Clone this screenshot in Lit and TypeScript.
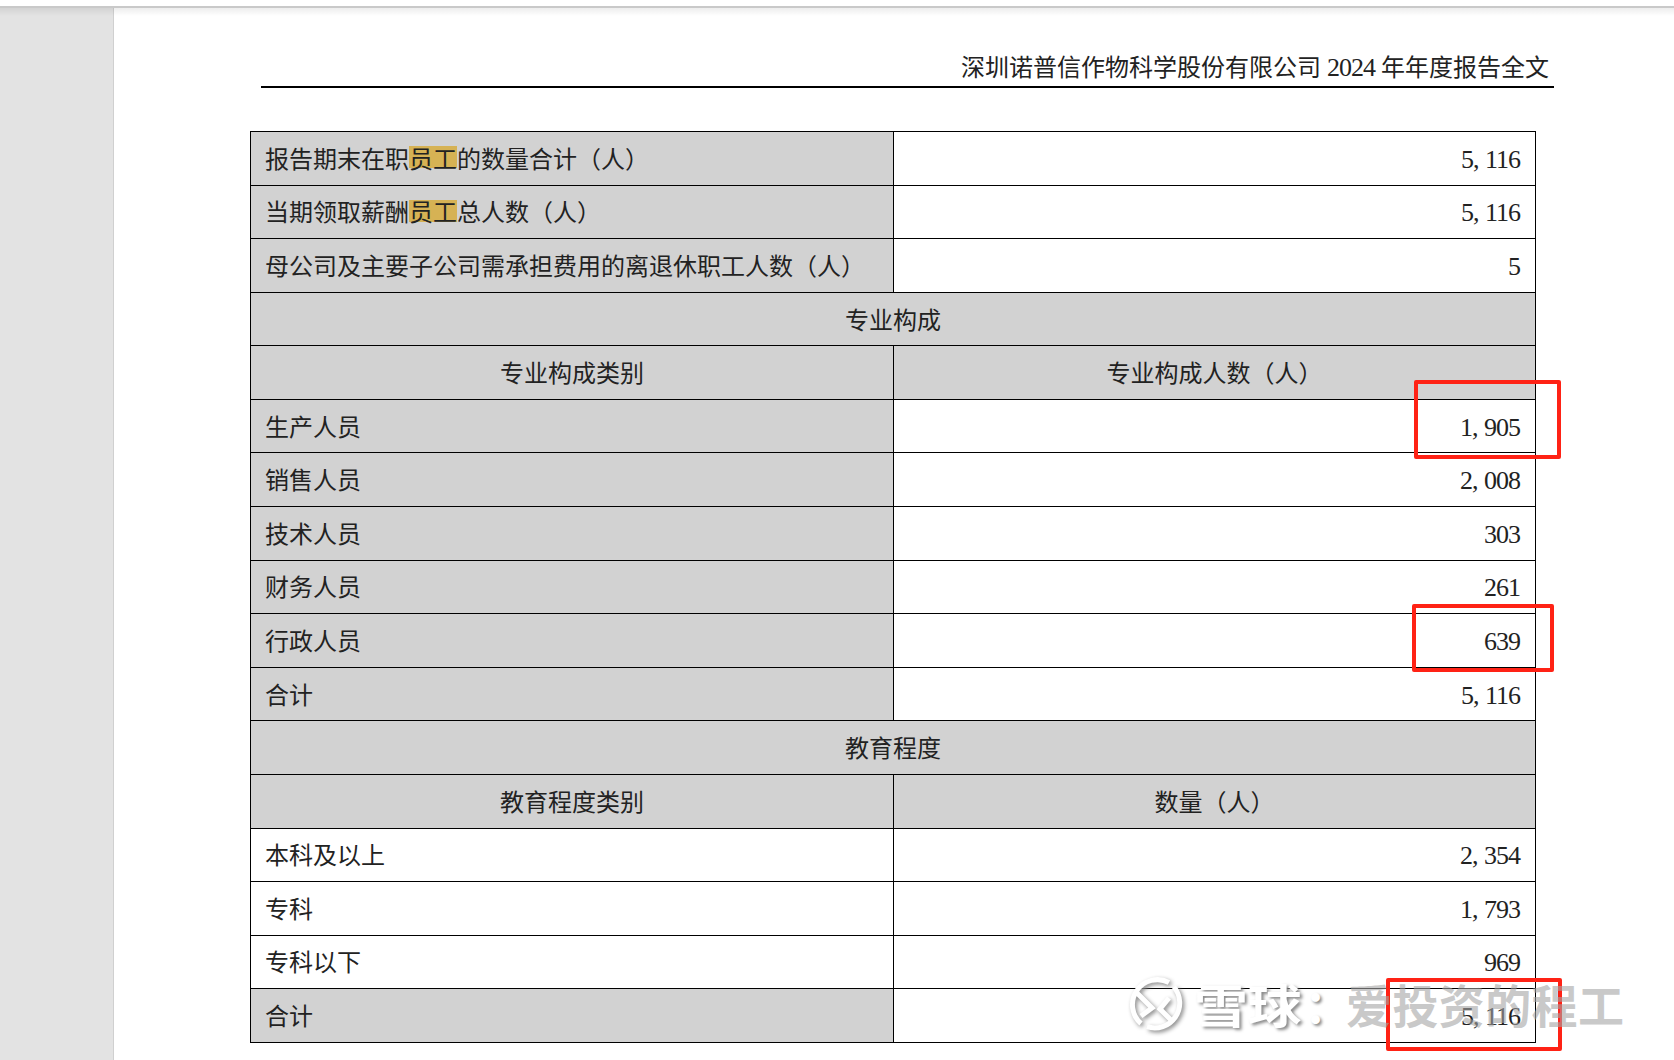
import { LitElement, html, css } from "lit";
import { customElement } from "lit/decorators.js";

type Row =
  | { t: "kv"; k: unknown; v: string; fill?: boolean }
  | { t: "sec"; k: string }
  | { t: "head"; a: string; b: string };

const hl = (a: string, b: string) => html`${a}<span class="hl">员工</span>${b}`;

const rows: Row[] = [
  { t: "kv", k: hl("报告期末在职", "的数量合计（人）"), v: "5,116", fill: true },
  { t: "kv", k: hl("当期领取薪酬", "总人数（人）"), v: "5,116", fill: true },
  { t: "kv", k: "母公司及主要子公司需承担费用的离退休职工人数（人）", v: "5", fill: true },
  { t: "sec", k: "专业构成" },
  { t: "head", a: "专业构成类别", b: "专业构成人数（人）" },
  { t: "kv", k: "生产人员", v: "1,905", fill: true },
  { t: "kv", k: "销售人员", v: "2,008", fill: true },
  { t: "kv", k: "技术人员", v: "303", fill: true },
  { t: "kv", k: "财务人员", v: "261", fill: true },
  { t: "kv", k: "行政人员", v: "639", fill: true },
  { t: "kv", k: "合计", v: "5,116", fill: true },
  { t: "sec", k: "教育程度" },
  { t: "head", a: "教育程度类别", b: "数量（人）" },
  { t: "kv", k: "本科及以上", v: "2,354" },
  { t: "kv", k: "专科", v: "1,793" },
  { t: "kv", k: "专科以下", v: "969" },
  { t: "kv", k: "合计", v: "5,116", fill: true },
];

const num = (v: string) => {
  const [a, b] = v.split(",");
  return b === undefined ? v : html`${a}<span class="comma">,</span>${b}`;
};

@customElement("app-root")
export class AppRoot extends LitElement {
  static styles = css`
    :host {
      display: block;
      position: relative;
      width: 1674px;
      height: 1060px;
      overflow: hidden;
      background: #e3e3e3;
      font-family: "Liberation Serif", "Noto Sans CJK SC", serif;
      font-size: 24px;
      color: #222;
    }
    .topbar {
      height: 6px;
      background: #fff;
      border-bottom: 2px solid #c9c9c9;
    }
    .shade {
      position: absolute;
      left: 0;
      right: 0;
      top: 8px;
      height: 8px;
      background: linear-gradient(rgba(0, 0, 0, 0.07), rgba(0, 0, 0, 0));
    }
    .main {
      display: flex;
      height: 1052px;
    }
    .gutter {
      width: 113px;
      flex: none;
      background: #e3e3e3;
      border-right: 1px solid #d0d0d0;
    }
    .page {
      flex: 1;
      background: #fff;
      padding: 40px 0 0 136px;
    }
    .header {
      width: 1293px;
      box-sizing: border-box;
      margin-left: 11px;
      height: 40px;
      border-bottom: 2px solid #000;
      text-align: right;
      padding-right: 5px;
      line-height: 40px;
      white-space: pre;
    }
    .digits {
      font-size: 26px;
      letter-spacing: -1px;
    }
    .table {
      margin-top: 43px;
      width: 1286px;
      display: grid;
      grid-template-columns: 643px 1fr;
      grid-auto-rows: 53.58px;
      box-sizing: border-box;
      border: solid #000;
      border-width: 1.5px 1.5px 0 1.5px;
    }
    .cell {
      display: flex;
      align-items: center;
      box-sizing: border-box;
      border-bottom: 1.5px solid #000;
      padding: 0 14px 2px;
      white-space: nowrap;
      min-width: 0;
    }
    .cell.left { border-right: 1.5px solid #000; }
    .fill { background: #d2d2d2; }
    .num {
      justify-content: flex-end;
      padding: 3px 15px 0 0;
      font-size: 26px;
      letter-spacing: -1px;
    }
    .center { justify-content: center; }
    .span { grid-column: 1 / 3; }
    .hl {
      background-image: linear-gradient(#d6b254, #d6b254);
      background-repeat: no-repeat;
      background-size: 100% 22px;
      background-position: center;
    }
    .comma { display: inline-block; width: 12px; }
    .mark {
      position: absolute;
      border: 4px solid #ff2215;
      border-radius: 2px;
      box-sizing: border-box;
    }
    .m1 { left: 1414px; top: 380px; width: 147px; height: 79px; }
    .m2 { left: 1412px; top: 604px; width: 142px; height: 68px; }
    .m3 { left: 1386px; top: 978px; width: 176px; height: 73px; }
    .wm {
      position: absolute;
      left: 1126px;
      top: 973px;
      display: flex;
      align-items: center;
      font-family: "Noto Sans CJK SC", sans-serif;
      font-weight: 700;
      font-size: 46px;
      line-height: 60px;
      white-space: nowrap;
    }
    .wm svg {
      display: block;
      flex: none;
      margin-right: 10px;
      filter: drop-shadow(2px 2px 2px #8a8a8a);
    }
    .wm .a {
      display: inline-block;
      width: 110px;
      transform: scaleX(1.17);
      transform-origin: left center;
      color: #fff;
      text-shadow: 2px 2px 3px #8a8a8a;
    }
    .wm .c {
      display: inline-block;
      width: 42px;
      color: #fff;
      text-shadow: 2px 2px 3px #8a8a8a;
    }
    .wm .b {
      color: rgba(165, 165, 165, 0.6);
      letter-spacing: 0.4px;
    }
  `;

  private row(r: Row) {
    if (r.t === "sec") return html`<div class="cell span fill center">${r.k}</div>`;
    if (r.t === "head")
      return html`<div class="cell left fill center">${r.a}</div>
        <div class="cell fill center">${r.b}</div>`;
    return html`<div class="cell left ${r.fill ? "fill" : ""}">${r.k}</div>
      <div class="cell num">${num(r.v)}</div>`;
  }

  render() {
    return html`
      <div class="topbar"></div>
      <div class="main">
        <div class="gutter"></div>
        <div class="page">
          <div class="header">深圳诺普信作物科学股份有限公司 <span class="digits">2024</span> 年年度报告全文</div>
          <div class="table">${rows.map((r) => this.row(r))}</div>
        </div>
      </div>
      <div class="shade"></div>
      <div class="mark m1"></div>
      <div class="mark m2"></div>
      <div class="mark m3"></div>
      <div class="wm">
        <svg width="58" height="60" viewBox="0 0 58 60" fill="none" stroke="#fff" stroke-width="5">
          <path d="M43 9.5A25 25 0 0 0 15 50.5" />
          <path d="M21 53.7A25 25 0 0 0 48 14" />
          <path d="M10 19L26 35 15 43" />
          <path d="M43 25L34 36 45 47" />
        </svg>
        <span class="a">雪球</span><span class="c">：</span><span class="b">爱投资的程工</span>
      </div>
    `;
  }
}
